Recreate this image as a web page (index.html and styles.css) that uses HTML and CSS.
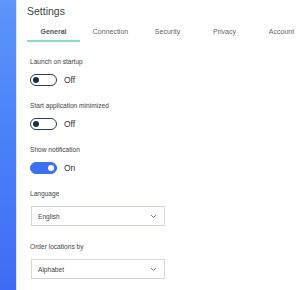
FILE: index.html
```html
<!DOCTYPE html>
<html lang="en">
<head>
    <meta charset="UTF-8">
    <title>Settings</title>
    <link rel="stylesheet" href="styles.css">
</head>
<body>

<!-- Left blue strip -->
<div class="sidebar"></div>

<div class="main">
    <h1 class="title">Settings</h1>

    <!-- Tabs -->
    <nav class="tabs">
        <a class="tab active" href="#">General</a>
        <a class="tab" href="#">Connection</a>
        <a class="tab" href="#">Security</a>
        <a class="tab" href="#">Privacy</a>
        <a class="tab" href="#">Account</a>
    </nav>

    <div class="form">
        <div class="field">
            <div class="label">Launch on startup</div>
            <div class="switch-row">
                <span class="switch"><span class="knob"></span></span>
                <span class="switch-text">Off</span>
            </div>
        </div>

        <div class="field">
            <div class="label">Start application minimized</div>
            <div class="switch-row">
                <span class="switch"><span class="knob"></span></span>
                <span class="switch-text">Off</span>
            </div>
        </div>

        <div class="field">
            <div class="label">Show notification</div>
            <div class="switch-row">
                <span class="switch on"><span class="knob"></span></span>
                <span class="switch-text">On</span>
            </div>
        </div>

        <div class="field select-field">
            <div class="label">Language</div>
            <div class="select">
                <span>English</span>
                <svg class="chevron" width="7" height="5" viewBox="0 0 7 5"><path d="M1 1 L3.5 3.5 L6 1" fill="none" stroke="#777" stroke-width="1"/></svg>
            </div>
        </div>

        <div class="field select-field">
            <div class="label">Order locations by</div>
            <div class="select">
                <span>Alphabet</span>
                <svg class="chevron" width="7" height="5" viewBox="0 0 7 5"><path d="M1 1 L3.5 3.5 L6 1" fill="none" stroke="#777" stroke-width="1"/></svg>
            </div>
        </div>
    </div>
</div>

</body>
</html>
```
FILE: styles.css
```css
body {
    font-family: "Liberation Sans", Arial, sans-serif;
    background-color: #fff;
    color: #444;
    margin: 0;
    padding: 0;
    display: flex;
    height: 290px;
    overflow: hidden;
}

/* Blue strip on the left */
.sidebar {
    width: 16px;
    flex-shrink: 0;
    background: linear-gradient(180deg, #5d95fa 0%, #4a80f7 50%, #3d6cf4 100%);
    border-right: 1px solid #e3e6ea;
}

.main {
    padding: 5px 0 0 10px;
    flex: 1;
    min-width: 0;
}

.title {
    margin: 0;
    font-size: 10.5px;
    font-weight: normal;
    line-height: 12px;
    color: #444;
}

/* Tabs */
.tabs {
    display: flex;
    margin-top: 10px;
    white-space: nowrap;
}
.tab {
    width: 53px;
    flex-shrink: 0;
    margin-right: 4px;
    text-align: center;
    font-size: 7px;
    line-height: 10px;
    color: #666;
    text-decoration: none;
    padding-bottom: 3px;
    border-bottom: 2px solid transparent;
}
.tab.active {
    color: #555;
    font-weight: bold;
    border-bottom-color: #86e0bf;
}

/* Form */
.form {
    margin-top: 15px;
    padding-left: 3px;
}
.field {
    margin-bottom: 15px;
}
.select-field {
    margin-bottom: 16px;
}
.label {
    font-size: 6.6px;
    line-height: 10px;
    color: #444;
    margin-bottom: 7px;
}

/* Switches */
.switch-row {
    display: flex;
    align-items: center;
    gap: 7px;
    height: 12px;
}
.switch {
    width: 21px;
    height: 10px;
    border: 1px solid #2c3b57;
    border-radius: 6px;
    display: flex;
    align-items: center;
    padding: 0 2px;
    box-sizing: content-box;
}
.switch .knob {
    width: 6px;
    height: 6px;
    border-radius: 50%;
    background-color: #1f2b45;
}
.switch.on {
    background-color: #3d6ff3;
    border-color: #3d6ff3;
    justify-content: flex-end;
}
.switch.on .knob {
    background-color: #fff;
}
.switch-text {
    font-size: 8.5px;
    color: #333;
}

/* Selects */
.select {
    box-sizing: border-box;
    width: 134px;
    height: 20px;
    margin-left: 1px;
    border: 1.5px solid #d3d8e0;
    display: flex;
    align-items: center;
    justify-content: space-between;
    padding: 0 6px;
    font-size: 6.6px;
    color: #444;
}
.chevron {
    margin-right: 1px;
}
```
